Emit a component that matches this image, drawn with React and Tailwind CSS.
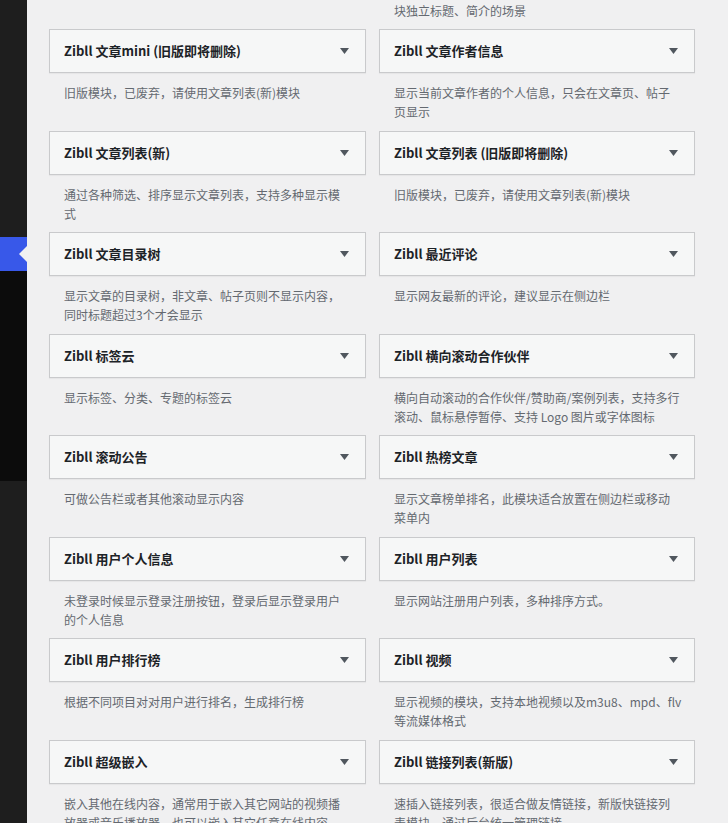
const rows = [
  [
    { title: 'Zibll 文章mini (旧版即将删除)', desc: ['旧版模块，已废弃，请使用文章列表(新)模块'] },
    { title: 'Zibll 文章作者信息', desc: ['显示当前文章作者的个人信息，只会在文章页、帖子', '页显示'] },
  ],
  [
    { title: 'Zibll 文章列表(新)', desc: ['通过各种筛选、排序显示文章列表，支持多种显示模', '式'] },
    { title: 'Zibll 文章列表 (旧版即将删除)', desc: ['旧版模块，已废弃，请使用文章列表(新)模块'] },
  ],
  [
    { title: 'Zibll 文章目录树', desc: ['显示文章的目录树，非文章、帖子页则不显示内容，', '同时标题超过3个才会显示'] },
    { title: 'Zibll 最近评论', desc: ['显示网友最新的评论，建议显示在侧边栏'] },
  ],
  [
    { title: 'Zibll 标签云', desc: ['显示标签、分类、专题的标签云'] },
    { title: 'Zibll 横向滚动合作伙伴', desc: ['横向自动滚动的合作伙伴/赞助商/案例列表，支持多行', '滚动、鼠标悬停暂停、支持 Logo 图片或字体图标'] },
  ],
  [
    { title: 'Zibll 滚动公告', desc: ['可做公告栏或者其他滚动显示内容'] },
    { title: 'Zibll 热榜文章', desc: ['显示文章榜单排名，此模块适合放置在侧边栏或移动', '菜单内'] },
  ],
  [
    { title: 'Zibll 用户个人信息', desc: ['未登录时候显示登录注册按钮，登录后显示登录用户', '的个人信息'] },
    { title: 'Zibll 用户列表', desc: ['显示网站注册用户列表，多种排序方式。'] },
  ],
  [
    { title: 'Zibll 用户排行榜', desc: ['根据不同项目对对用户进行排名，生成排行榜'] },
    { title: 'Zibll 视频', desc: ['显示视频的模块，支持本地视频以及m3u8、mpd、flv', '等流媒体格式'] },
  ],
  [
    { title: 'Zibll 超级嵌入', desc: ['嵌入其他在线内容，通常用于嵌入其它网站的视频播', '放器或音乐播放器，也可以嵌入其它任意在线内容'] },
    { title: 'Zibll 链接列表(新版)', desc: ['速插入链接列表，很适合做友情链接，新版快链接列', '表模块，通过后台统一管理链接'] },
  ],
];

function Widget({ title, desc }) {
  return (
    <div className="h-[101.5px]">
      <div className="h-[44px] bg-[#f6f7f7] border border-[#c9cacc] shadow-[0_1px_1px_rgba(0,0,0,0.04)] flex items-center justify-between pl-[14px] pr-[16px]">
        <h3 className="text-[13px] font-semibold text-[#1d2327] whitespace-nowrap">{title}</h3>
        <svg width="9" height="6" viewBox="0 0 9 6" className="text-[#50575e]">
          <path d="M0 0h9L4.5 6z" fill="currentColor" />
        </svg>
      </div>
      <div className="pt-[10px] px-[15px] text-[12px] leading-[19px] text-[#646970]">
        {desc.map((line) => (
          <p key={line} className="whitespace-nowrap">{line}</p>
        ))}
      </div>
    </div>
  );
}

export default function App() {
  return (
    <div
      className="h-[823px] flex overflow-hidden bg-[#f0f0f1]"
      style={{ fontFamily: '"Noto Sans CJK SC", "Noto Sans", sans-serif' }}
    >
      {/* Admin menu */}
      <div className="w-[27px] flex-shrink-0 flex flex-col">
        <div className="h-[237px] bg-[#1e1e1e]" />
        <div className="h-[34px] bg-[#3858e9] relative">
          <span className="absolute right-0 top-[9px] w-0 h-0 border-y-[8px] border-y-transparent border-r-[8px] border-r-[#f0f0f1]" />
        </div>
        <div className="h-[210px] bg-[#0c0c0c]" />
        <div className="flex-1 bg-[#1e1e1e]" />
      </div>

      {/* Widgets */}
      <div className="pl-[22px] w-[668px] flex-shrink-0">
        <div className="h-[29px] grid grid-cols-[317px_316px] gap-x-[13px]">
          <div />
          <p className="pt-[1px] px-[15px] text-[12px] leading-[19px] text-[#646970] whitespace-nowrap">块独立标题、简介的场景</p>
        </div>
        {rows.map((row, i) => (
          <div key={i} className="grid grid-cols-[317px_316px] gap-x-[13px]">
            {row.map((w) => (
              <Widget key={w.title} {...w} />
            ))}
          </div>
        ))}
      </div>
    </div>
  );
}
